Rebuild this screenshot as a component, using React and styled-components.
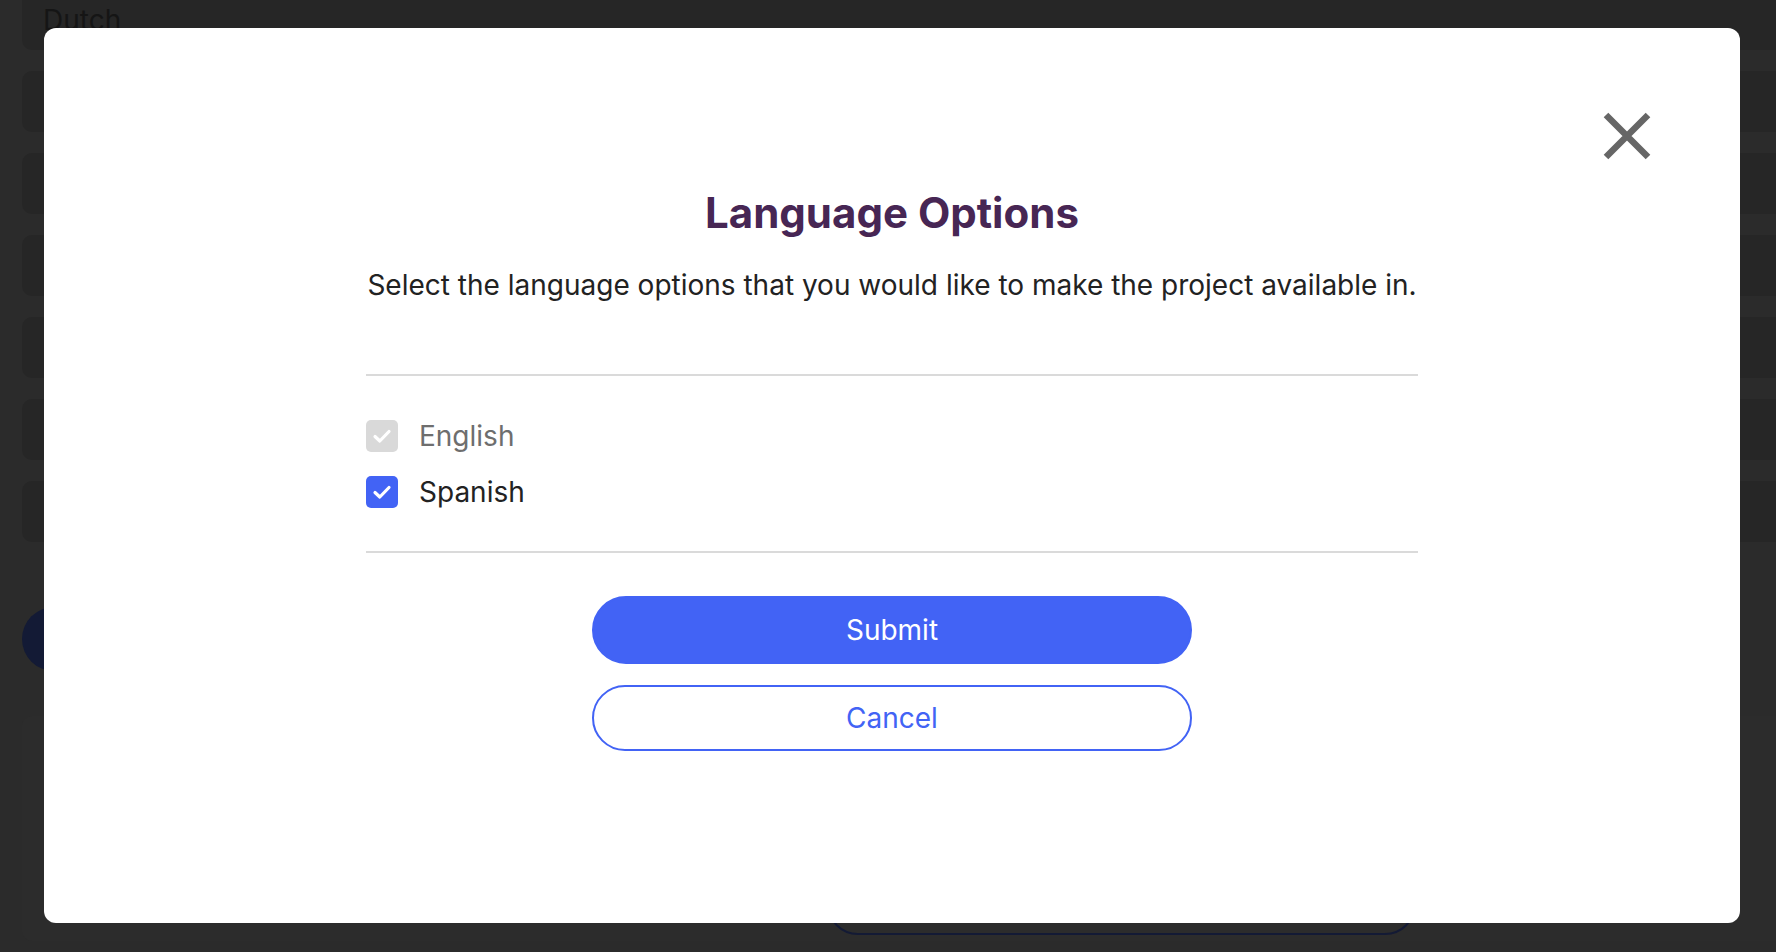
import { useState } from 'react'
import styled, { createGlobalStyle } from 'styled-components'

const Global = createGlobalStyle`
  html, body {
    margin: 0;
    padding: 0;
    background: #2b2b2b;
    overflow: hidden;
    font-family: Inter, 'Noto Sans', sans-serif;
  }
  * {
    box-sizing: border-box;
  }
`

const Pagina = styled.div`
  height: 952px;
  padding-left: 22px;
  margin-top: -11px;
  display: flex;
  flex-direction: column;
`

const ListaIdiomas = styled.div`
  display: flex;
  flex-direction: column;
  gap: 21px;
`

const FilaIdioma = styled.div`
  height: 61px;
  width: 1900px;
  border-radius: 10px;
  background: #262626;
  padding: 14px 0 0 21px;
  font-size: 28px;
  line-height: 34px;
  color: #151515;
`

const BotonFondo = styled.div`
  margin-top: 65px;
  width: 420px;
  height: 64px;
  border-radius: 32px;
  background: #131a35;
`

const TarjetaFondo = styled.div`
  margin-top: 45px;
  flex: 1;
  width: 1900px;
  border-radius: 10px;
  background: #2c2c2c;
  padding: 157px 0 0 805px;
`

const BotonContorno = styled.div`
  width: 589px;
  height: 62px;
  border-radius: 31px;
  border: 2px solid #131a35;
`

const Overlay = styled.div`
  position: fixed;
  inset: 0;
  display: flex;
  padding: 28px 36px 29px 44px;
`

const Modal = styled.div`
  flex: 1;
  position: relative;
  background: #ffffff;
  border-radius: 12px;
  display: flex;
  flex-direction: column;
  align-items: center;
  padding-top: 161px;
`

const Cerrar = styled.button`
  position: absolute;
  top: 84px;
  right: 89px;
  width: 48px;
  height: 48px;
  padding: 0;
  border: none;
  background: none;
  cursor: pointer;
  display: flex;
  align-items: center;
  justify-content: center;
`

const Titulo = styled.h2`
  margin: 0;
  font-size: 42px;
  line-height: 48px;
  font-weight: 700;
  color: #472654;
`

const Descripcion = styled.p`
  margin: 31px 0 0;
  font-size: 28px;
  line-height: 34px;
  color: #222222;
`

const Contenido = styled.div`
  width: 1052px;
  margin-top: 72px;
  display: flex;
  flex-direction: column;
`

const Separador = styled.hr`
  margin: 0;
  border: none;
  height: 2px;
  background: #dadada;
`

const Opciones = styled.div`
  display: flex;
  flex-direction: column;
  gap: 24px;
  padding: 44px 0 43px;
`

const Opcion = styled.label`
  display: flex;
  align-items: center;
  gap: 21px;
  font-size: 28px;
  line-height: 32px;
  color: ${(p) => (p.$deshabilitada ? '#6e6e6e' : '#222222')};
  cursor: ${(p) => (p.$deshabilitada ? 'default' : 'pointer')};
`

const Casilla = styled.span`
  width: 32px;
  height: 32px;
  border-radius: 5px;
  display: flex;
  align-items: center;
  justify-content: center;
  background: ${(p) =>
    p.$deshabilitada ? '#d9d9d9' : p.$marcada ? '#4263f5' : '#ffffff'};
  border: ${(p) => (p.$marcada || p.$deshabilitada ? 'none' : '2px solid #bbb')};
`

const Botones = styled.div`
  margin-top: 43px;
  width: 600px;
  display: flex;
  flex-direction: column;
  gap: 21px;
`

const Boton = styled.button`
  width: 100%;
  height: ${(p) => (p.$secundario ? '66px' : '68px')};
  border-radius: 34px;
  font-family: inherit;
  font-size: 28px;
  cursor: pointer;
  background: ${(p) => (p.$secundario ? '#ffffff' : '#4263f5')};
  color: ${(p) => (p.$secundario ? '#4263f5' : '#ffffff')};
  border: 2px solid #4263f5;
`

const Check = () => (
  <svg width="22" height="22" viewBox="0 0 22 22">
    <polyline
      points="4,11.5 8.8,16 18,6.5"
      fill="none"
      stroke="#ffffff"
      strokeWidth="3.2"
      strokeLinecap="round"
      strokeLinejoin="round"
    />
  </svg>
)

const idiomasFondo = ['Dutch', '', '', '', '', '', '']

const App = () => {
  const [idiomas, setIdiomas] = useState({ English: true, Spanish: true })

  const alternar = (nombre) => {
    if (nombre === 'English') return // El idioma base no se puede quitar.
    setIdiomas({ ...idiomas, [nombre]: !idiomas[nombre] })
  }

  return (
    <>
      <Global />
      <Pagina>
        <ListaIdiomas>
          {idiomasFondo.map((nombre, i) => (
            <FilaIdioma key={i}>{nombre}</FilaIdioma>
          ))}
        </ListaIdiomas>
        <BotonFondo />
        <TarjetaFondo>
          <BotonContorno />
        </TarjetaFondo>
      </Pagina>

      <Overlay>
        <Modal>
          <Cerrar aria-label="Cerrar">
            <svg width="48" height="48" viewBox="0 0 48 48">
              <path
                d="M3 3 L45 45 M45 3 L3 45"
                stroke="#666666"
                strokeWidth="6.5"
                fill="none"
              />
            </svg>
          </Cerrar>

          <Titulo>Language Options</Titulo>
          <Descripcion>
            Select the language options that you would like to make the project available in.
          </Descripcion>

          <Contenido>
            <Separador />
            <Opciones>
              {Object.keys(idiomas).map((nombre) => {
                const deshabilitada = nombre === 'English'
                return (
                  <Opcion
                    key={nombre}
                    $deshabilitada={deshabilitada}
                    onClick={() => alternar(nombre)}
                  >
                    <Casilla $marcada={idiomas[nombre]} $deshabilitada={deshabilitada}>
                      {idiomas[nombre] && <Check />}
                    </Casilla>
                    {nombre}
                  </Opcion>
                )
              })}
            </Opciones>
            <Separador />
          </Contenido>

          <Botones>
            <Boton>Submit</Boton>
            <Boton $secundario>Cancel</Boton>
          </Botones>
        </Modal>
      </Overlay>
    </>
  )
}

export default App
